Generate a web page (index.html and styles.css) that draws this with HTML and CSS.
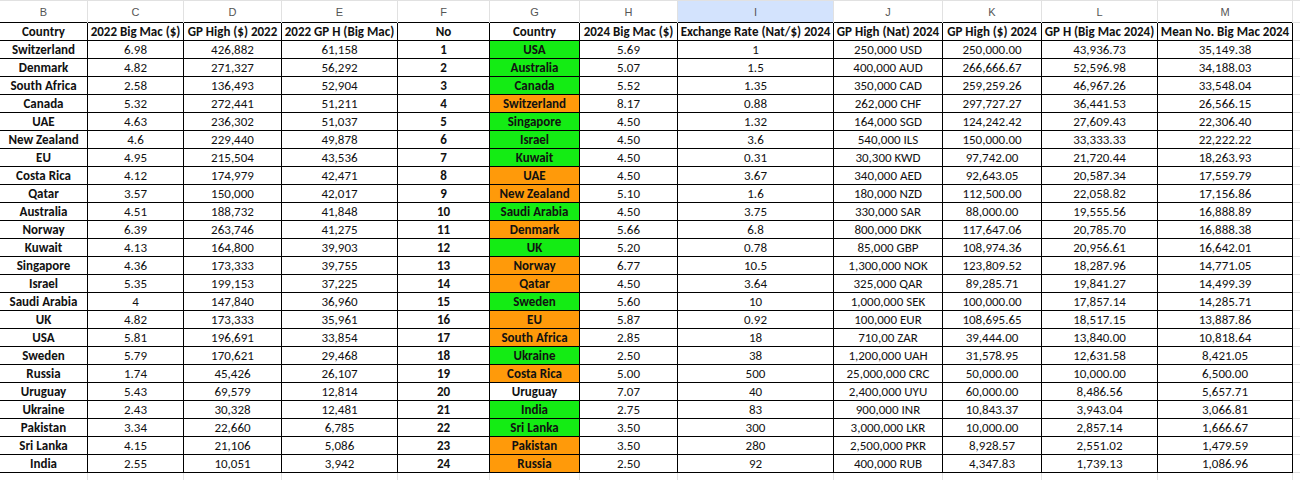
FILE: index.html
```html
<!DOCTYPE html>
<html>
<head>
<meta charset="utf-8">
<link rel="stylesheet" href="styles.css">
</head>
<body>
<table class="sheet">
<colgroup>
<col class="cb"><col class="cc"><col class="cd"><col class="ce"><col class="cf"><col class="cg"><col class="ch"><col class="ci"><col class="cj"><col class="ck"><col class="cl"><col class="cm"><col class="cn">
</colgroup>
<tr class="letters"><td>B</td><td>C</td><td>D</td><td>E</td><td>F</td><td>G</td><td>H</td><td class="sel">I</td><td>J</td><td>K</td><td>L</td><td>M</td><td class="n"></td></tr>
<tr class="head"><td>Country</td><td>2022 Big Mac ($)</td><td>GP High ($) 2022</td><td>2022 GP H (Big Mac)</td><td>No</td><td>Country</td><td>2024 Big Mac ($)</td><td>Exchange Rate (Nat/$) 2024</td><td>GP High (Nat) 2024</td><td>GP High ($) 2024</td><td>GP H (Big Mac 2024)</td><td>Mean No. Big Mac 2024</td><td class="n"></td></tr>
<tr><td class="b">Switzerland</td><td>6.98</td><td>426,882</td><td>61,158</td><td class="b">1</td><td class="b g">USA</td><td>5.69</td><td>1</td><td>250,000 USD</td><td>250,000.00</td><td>43,936.73</td><td>35,149.38</td><td class="n"></td></tr>
<tr><td class="b">Denmark</td><td>4.82</td><td>271,327</td><td>56,292</td><td class="b">2</td><td class="b g">Australia</td><td>5.07</td><td>1.5</td><td>400,000 AUD</td><td>266,666.67</td><td>52,596.98</td><td>34,188.03</td><td class="n"></td></tr>
<tr><td class="b">South Africa</td><td>2.58</td><td>136,493</td><td>52,904</td><td class="b">3</td><td class="b g">Canada</td><td>5.52</td><td>1.35</td><td>350,000 CAD</td><td>259,259.26</td><td>46,967.26</td><td>33,548.04</td><td class="n"></td></tr>
<tr><td class="b">Canada</td><td>5.32</td><td>272,441</td><td>51,211</td><td class="b">4</td><td class="b o">Switzerland</td><td>8.17</td><td>0.88</td><td>262,000 CHF</td><td>297,727.27</td><td>36,441.53</td><td>26,566.15</td><td class="n"></td></tr>
<tr><td class="b">UAE</td><td>4.63</td><td>236,302</td><td>51,037</td><td class="b">5</td><td class="b g">Singapore</td><td>4.50</td><td>1.32</td><td>164,000 SGD</td><td>124,242.42</td><td>27,609.43</td><td>22,306.40</td><td class="n"></td></tr>
<tr><td class="b">New Zealand</td><td>4.6</td><td>229,440</td><td>49,878</td><td class="b">6</td><td class="b g">Israel</td><td>4.50</td><td>3.6</td><td>540,000 ILS</td><td>150,000.00</td><td>33,333.33</td><td>22,222.22</td><td class="n"></td></tr>
<tr><td class="b">EU</td><td>4.95</td><td>215,504</td><td>43,536</td><td class="b">7</td><td class="b g">Kuwait</td><td>4.50</td><td>0.31</td><td>30,300 KWD</td><td>97,742.00</td><td>21,720.44</td><td>18,263.93</td><td class="n"></td></tr>
<tr><td class="b">Costa Rica</td><td>4.12</td><td>174,979</td><td>42,471</td><td class="b">8</td><td class="b o">UAE</td><td>4.50</td><td>3.67</td><td>340,000 AED</td><td>92,643.05</td><td>20,587.34</td><td>17,559.79</td><td class="n"></td></tr>
<tr><td class="b">Qatar</td><td>3.57</td><td>150,000</td><td>42,017</td><td class="b">9</td><td class="b o">New Zealand</td><td>5.10</td><td>1.6</td><td>180,000 NZD</td><td>112,500.00</td><td>22,058.82</td><td>17,156.86</td><td class="n"></td></tr>
<tr><td class="b">Australia</td><td>4.51</td><td>188,732</td><td>41,848</td><td class="b">10</td><td class="b g">Saudi Arabia</td><td>4.50</td><td>3.75</td><td>330,000 SAR</td><td>88,000.00</td><td>19,555.56</td><td>16,888.89</td><td class="n"></td></tr>
<tr><td class="b">Norway</td><td>6.39</td><td>263,746</td><td>41,275</td><td class="b">11</td><td class="b o">Denmark</td><td>5.66</td><td>6.8</td><td>800,000 DKK</td><td>117,647.06</td><td>20,785.70</td><td>16,888.38</td><td class="n"></td></tr>
<tr><td class="b">Kuwait</td><td>4.13</td><td>164,800</td><td>39,903</td><td class="b">12</td><td class="b g">UK</td><td>5.20</td><td>0.78</td><td>85,000 GBP</td><td>108,974.36</td><td>20,956.61</td><td>16,642.01</td><td class="n"></td></tr>
<tr><td class="b">Singapore</td><td>4.36</td><td>173,333</td><td>39,755</td><td class="b">13</td><td class="b o">Norway</td><td>6.77</td><td>10.5</td><td>1,300,000 NOK</td><td>123,809.52</td><td>18,287.96</td><td>14,771.05</td><td class="n"></td></tr>
<tr><td class="b">Israel</td><td>5.35</td><td>199,153</td><td>37,225</td><td class="b">14</td><td class="b o">Qatar</td><td>4.50</td><td>3.64</td><td>325,000 QAR</td><td>89,285.71</td><td>19,841.27</td><td>14,499.39</td><td class="n"></td></tr>
<tr><td class="b">Saudi Arabia</td><td>4</td><td>147,840</td><td>36,960</td><td class="b">15</td><td class="b g">Sweden</td><td>5.60</td><td>10</td><td>1,000,000 SEK</td><td>100,000.00</td><td>17,857.14</td><td>14,285.71</td><td class="n"></td></tr>
<tr><td class="b">UK</td><td>4.82</td><td>173,333</td><td>35,961</td><td class="b">16</td><td class="b o">EU</td><td>5.87</td><td>0.92</td><td>100,000 EUR</td><td>108,695.65</td><td>18,517.15</td><td>13,887.86</td><td class="n"></td></tr>
<tr><td class="b">USA</td><td>5.81</td><td>196,691</td><td>33,854</td><td class="b">17</td><td class="b o">South Africa</td><td>2.85</td><td>18</td><td>710,00 ZAR</td><td>39,444.00</td><td>13,840.00</td><td>10,818.64</td><td class="n"></td></tr>
<tr><td class="b">Sweden</td><td>5.79</td><td>170,621</td><td>29,468</td><td class="b">18</td><td class="b g">Ukraine</td><td>2.50</td><td>38</td><td>1,200,000 UAH</td><td>31,578.95</td><td>12,631.58</td><td>8,421.05</td><td class="n"></td></tr>
<tr><td class="b">Russia</td><td>1.74</td><td>45,426</td><td>26,107</td><td class="b">19</td><td class="b o">Costa Rica</td><td>5.00</td><td>500</td><td>25,000,000 CRC</td><td>50,000.00</td><td>10,000.00</td><td>6,500.00</td><td class="n"></td></tr>
<tr><td class="b">Uruguay</td><td>5.43</td><td>69,579</td><td>12,814</td><td class="b">20</td><td class="b">Uruguay</td><td>7.07</td><td>40</td><td>2,400,000 UYU</td><td>60,000.00</td><td>8,486.56</td><td>5,657.71</td><td class="n"></td></tr>
<tr><td class="b">Ukraine</td><td>2.43</td><td>30,328</td><td>12,481</td><td class="b">21</td><td class="b g">India</td><td>2.75</td><td>83</td><td>900,000 INR</td><td>10,843.37</td><td>3,943.04</td><td>3,066.81</td><td class="n"></td></tr>
<tr><td class="b">Pakistan</td><td>3.34</td><td>22,660</td><td>6,785</td><td class="b">22</td><td class="b g">Sri Lanka</td><td>3.50</td><td>300</td><td>3,000,000 LKR</td><td>10,000.00</td><td>2,857.14</td><td>1,666.67</td><td class="n"></td></tr>
<tr><td class="b">Sri Lanka</td><td>4.15</td><td>21,106</td><td>5,086</td><td class="b">23</td><td class="b o">Pakistan</td><td>3.50</td><td>280</td><td>2,500,000 PKR</td><td>8,928.57</td><td>2,551.02</td><td>1,479.59</td><td class="n"></td></tr>
<tr><td class="b">India</td><td>2.55</td><td>10,051</td><td>3,942</td><td class="b">24</td><td class="b o">Russia</td><td>2.50</td><td>92</td><td>400,000 RUB</td><td>4,347.83</td><td>1,739.13</td><td>1,086.96</td><td class="n"></td></tr>
<tr class="empty"><td></td><td></td><td></td><td></td><td></td><td></td><td></td><td></td><td></td><td></td><td></td><td></td><td class="n"></td></tr>
</table>
</body>
</html>
```
FILE: styles.css
```css
html, body {
  margin: 0;
  padding: 0;
  background: #ffffff;
  overflow: hidden;
}

.sheet {
  border-collapse: collapse;
  table-layout: fixed;
  width: 1333px;
  margin-left: -1px;
  font-family: Carlito, Calibri, Lato, "Liberation Sans", sans-serif;
  font-size: 13px;
  color: #111111;
}

.cb { width: 88px; }
.cc { width: 96px; }
.cd { width: 98px; }
.ce { width: 116px; }
.cf { width: 92px; }
.cg { width: 90px; }
.ch { width: 98px; }
.ci { width: 156px; }
.cj { width: 109px; }
.ck { width: 99px; }
.cl { width: 116px; }
.cm { width: 135px; }
.cn { width: 40px; }

.sheet td {
  border: 1px solid #000000;
  height: 17px;
  padding: 0;
  line-height: 16px;
  text-align: center;
  white-space: nowrap;
  overflow: hidden;
}

.sheet .letters td {
  border: 1px solid #e1e1e1;
  border-bottom: none;
  height: 21px;
  font-family: "Liberation Sans", Arial, sans-serif;
  font-size: 11px;
  color: #555555;
  background: #ffffff;
}

.sheet .letters td.sel {
  background: #d3e3fd;
}

.sheet .head td {
  font-weight: bold;
}

.sheet td.b {
  font-weight: bold;
}

.sheet td.g {
  background: #14ec14;
}

.sheet td.o {
  background: #ff9a0a;
}

.sheet td.n {
  border: 1px solid #e1e1e1;
  border-left: none;
}

.sheet .empty td {
  border: 1px solid #e1e1e1;
  border-top: none;
  height: 12px;
}
```
